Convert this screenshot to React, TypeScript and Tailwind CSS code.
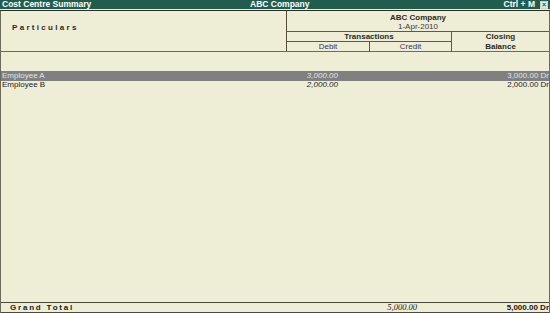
export default function App() {
  const rows = [
    { name: 'Employee A', debit: '3,000.00', closing: '3,000.00 Dr', active: true },
    { name: 'Employee B', debit: '2,000.00', closing: '2,000.00 Dr', active: false },
  ];

  return (
    <div className="w-[550px] h-[313px] flex flex-col bg-[#eeeed6] font-['Liberation_Sans',Arial,sans-serif] text-[8px] text-[#1a1a1a] overflow-hidden">
      {/* Title bar */}
      <div className="h-[9px] shrink-0 flex items-center bg-[#205d4f] text-white font-bold text-[8.5px] leading-none px-[2px]">
        <span className="w-[230px]">Cost Centre Summary</span>
        <span className="flex-1 pl-[18px]">ABC Company</span>
        <span className="mr-[5px]">Ctrl + M</span>
        <span className="w-[8px] h-[8px] border border-[#c9d6d0] bg-[#dfe6e2] text-[#205d4f] text-[7px] leading-[6px] text-center">×</span>
      </div>
      <div className="h-[2px] shrink-0 border-b border-[#2c2c22]" />

      <div className="flex-1 flex flex-col border-r border-l border-[#6b6b5a]">
        {/* Column header */}
        <div className="h-[41px] shrink-0 flex border-b border-[#6b6b5a]">
          <div className="w-[286px] border-r border-[#5a4a3a] pl-[11px] pt-[11px]">
            <span className="font-bold tracking-[2.3px] text-[#2a2a2a]">Particulars</span>
          </div>
          <div className="flex-1 flex flex-col">
            <div className="h-[21px] border-b border-[#5a5a48] flex flex-col items-center pt-[2px] leading-[9px]">
              <span className="font-bold text-[#2a2a2a]">ABC Company</span>
              <span className="text-[#4a3052]">1-Apr-2010</span>
            </div>
            <div className="flex-1 flex">
              <div className="w-[165px] border-r border-[#5a5a48] flex flex-col">
                <div className="h-[10px] border-b border-[#5a5a48] text-center font-bold leading-[9px] text-[#2a2a2a]">Transactions</div>
                <div className="flex-1 flex text-[#4a3052] leading-[9px]">
                  <div className="w-[83px] border-r border-[#5a5a48] text-center">Debit</div>
                  <div className="flex-1 text-center">Credit</div>
                </div>
              </div>
              <div className="flex-1 flex flex-col items-center font-bold leading-[10px] text-[#2a2a2a]">
                <span>Closing</span>
                <span>Balance</span>
              </div>
            </div>
          </div>
        </div>

        {/* Rows */}
        <div className="flex-1 pt-[19px]">
          {rows.map((r) => (
            <div
              key={r.name}
              className={`h-[9.5px] flex items-center leading-none pl-[1px] ${r.active ? 'bg-[#808080] text-[#dde6ee]' : 'text-[#1a1a1a]'}`}
            >
              <span className="w-[285px]">{r.name}</span>
              <span className="w-[51px] text-right italic">{r.debit}</span>
              <span className="flex-1 text-right">{r.closing}</span>
            </div>
          ))}
        </div>

        {/* Grand total */}
        <div className="h-[11px] shrink-0 flex items-center border-t border-b border-[#4a4a3a] leading-none pl-[9px]">
          <span className="w-[313px] font-bold tracking-[1.8px]">Grand Total</span>
          <span className="w-[94px] text-right italic font-['Liberation_Serif',serif] text-[8.5px]">5,000.00</span>
          <span className="flex-1 text-right font-bold">5,000.00 Dr</span>
        </div>
      </div>
    </div>
  );
}
